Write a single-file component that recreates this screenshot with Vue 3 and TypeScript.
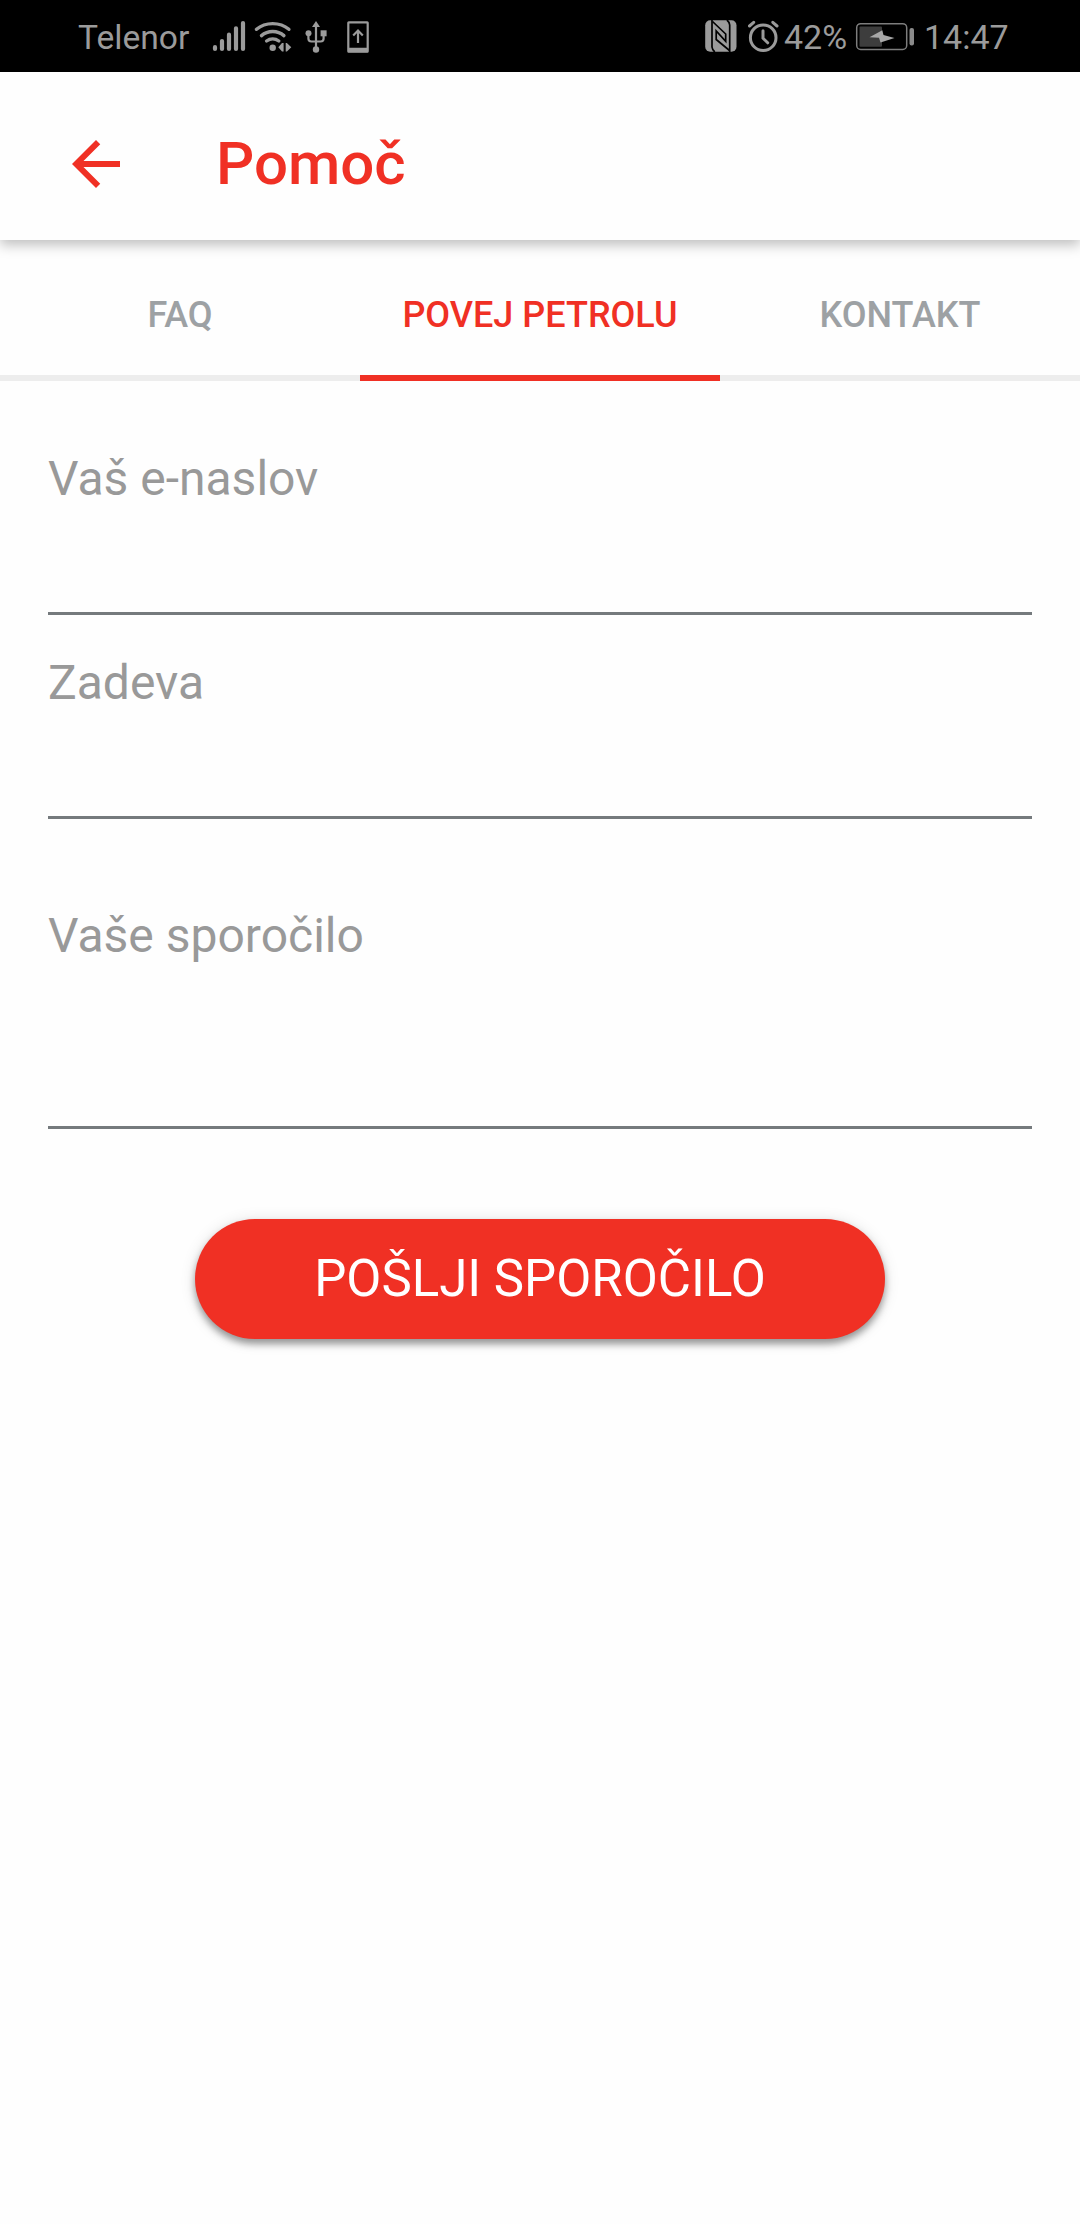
<script setup lang="ts">
import { ref } from 'vue'

interface Tab {
  id: string
  label: string
}

interface Field {
  id: string
  label: string
  tall: boolean
}

const tabs: Tab[] = [
  { id: 'faq', label: 'FAQ' },
  { id: 'tell', label: 'POVEJ PETROLU' },
  { id: 'contact', label: 'KONTAKT' },
]

const fields: Field[] = [
  { id: 'email', label: 'Vaš e-naslov', tall: false },
  { id: 'subject', label: 'Zadeva', tall: false },
  { id: 'message', label: 'Vaše sporočilo', tall: true },
]

const activeTab = ref('tell')
const values = ref<Record<string, string>>({ email: '', subject: '', message: '' })
</script>

<template>
  <div class="screen">
    <div class="status">
      <div class="status-side">
        <span class="carrier">Telenor</span>
        <!-- signal -->
        <svg class="signal" width="34" height="40" viewBox="212 17 34 40" fill="none" stroke="#9b9b9b" stroke-width="4.2" stroke-linecap="round">
          <path d="M215 47.2v1.8M222 41v8M229 34.7V49M236 28.3V49M243 23v26" />
        </svg>
        <!-- wifi -->
        <svg class="wifi" width="38" height="40" viewBox="254 17 38 40" fill="none" stroke="#9b9b9b" stroke-width="3.4" stroke-linecap="round">
          <path d="M256.5 29.3c9-7.6 23.400-7.600 32.400 0M261.500 35.600c6.300-5.500 16.100-5.500 22.400 0M266.600 41c3.600-2.700 8.600-2.700 12.200 0" />
          <circle cx="272.700" cy="47.700" r="3.200" fill="#9b9b9b" stroke="none" />
          <path d="M278.300 47.200l3.700-4.200h1.600v8.400H282zM285.700 43h1.200l4.400 4.200-4.400 4.200h-1.200z" fill="#9b9b9b" stroke="none" />
        </svg>
        <!-- usb -->
        <svg class="usb" width="22" height="40" viewBox="305 17 22 40" fill="none" stroke="#9b9b9b" stroke-width="2.200">
          <path d="M316 27v20M308.400 34v4.500q0 3 3 3h9.200q3 0 3-3V34" />
          <path d="M316 21l4 6h-8z" fill="#9b9b9b" stroke="none" />
          <circle cx="308.500" cy="33.300" r="3" fill="#9b9b9b" stroke="none" />
          <rect x="320.600" y="30.300" width="6" height="6" fill="#9b9b9b" stroke="none" />
          <circle cx="316" cy="49.500" r="3.200" fill="#9b9b9b" stroke="none" />
        </svg>
        <!-- phone with arrow -->
        <svg class="phone" width="22" height="40" viewBox="347 17 22 40" fill="none" stroke="#9b9b9b" stroke-width="2.200">
          <rect x="348.300" y="22.300" width="19.400" height="29.400" rx="0.500" />
          <path d="M348 50h20" stroke-width="4.500" />
          <path d="M358 43V30.500M353.200 35.500l4.800-5 4.800 5" />
        </svg>
      </div>
      <div class="status-side">
        <!-- nfc -->
        <svg class="nfc" width="32" height="40" viewBox="705 17 32 40">
          <rect x="705.200" y="20.300" width="31.300" height="31.400" rx="5" fill="#9b9b9b" />
          <g fill="none" stroke="#000" stroke-width="1.700">
            <path d="M712 20v27q.3 3 2.800 5M729.700 52V25q-.3-3-2.800-5" />
            <path d="M712.500 21.500L725.700 34v7.300L716.200 31v8.500L729.500 50.500" />
          </g>
        </svg>
        <!-- alarm -->
        <svg class="alarm" width="32" height="40" viewBox="747 17 32 40" fill="none" stroke="#9b9b9b" stroke-linecap="round">
          <circle cx="763.200" cy="37.700" r="12.800" stroke-width="3" />
          <path d="M763 30.800v7.400l4.700 4.600" stroke-width="3" />
          <path d="M749.500 26l4.200-3.700M772.800 22.300L777 26" stroke-width="3" />
        </svg>
        <span class="percent">42%</span>
        <!-- battery -->
        <svg class="battery" width="60" height="40" viewBox="855 17 60 40" fill="none">
          <rect x="856.700" y="23.700" width="50" height="25.800" rx="4" stroke="#7d7d7d" stroke-width="1.500" />
          <rect x="859.500" y="26.500" width="22.500" height="20.200" rx="1" fill="#3d3d3d" />
          <path d="M869.500 37.200l12.800-7 1.200 4.800 11 3-14 4.500-1.500-4.800z" fill="#a8a8a8" />
          <rect x="909.500" y="28" width="4.500" height="17.500" rx="2" fill="#8a8a8a" />
        </svg>
        <span class="clock">14:47</span>
      </div>
    </div>

    <header class="bar">
      <svg class="back" width="72" height="72" viewBox="0 0 24 24" fill="#f03024">
        <path d="M20 11H7.830l5.590-5.590L12 4l-8 8 8 8 1.410-1.410L7.830 13H20v-2z" />
      </svg>
      <h1 class="title">Pomoč</h1>
    </header>

    <nav class="tabs">
      <div
        v-for="tab in tabs"
        :key="tab.id"
        class="tab"
        :class="{ active: tab.id === activeTab }"
        @click="activeTab = tab.id"
      >
        {{ tab.label }}
      </div>
    </nav>

    <form class="form" @submit.prevent>
      <div v-for="field in fields" :key="field.id" class="field" :class="{ tall: field.tall }">
        <label class="label" :for="field.id">{{ field.label }}</label>
        <input :id="field.id" v-model="values[field.id]" class="input" />
      </div>
      <button class="send" type="submit">POŠLJI SPOROČILO</button>
    </form>
  </div>
</template>

<style>
body {
  margin: 0;
  background: #fefefe;
}
</style>

<style scoped>
.screen {
  width: 1080px;
  height: 2224px;
  overflow: hidden;
  display: flex;
  flex-direction: column;
  background: #fefefe;
  font-family: Roboto, sans-serif;
}

.status {
  height: 72px;
  box-sizing: border-box;
  padding: 2px 71px 0 78px;
  display: flex;
  justify-content: space-between;
  background: #000;
  color: #9b9b9b;
  font-size: 34px;
}

.status-side {
  display: flex;
  align-items: center;
  white-space: nowrap;
}

.carrier {
  width: 134px;
  font-size: 33.6px;
}

.percent {
  width: 66px;
  margin-left: 5px;
}

.clock {
  width: 85px;
  margin-left: 9px;
}

.battery {
  margin-left: 5px;
}

.wifi {
  margin-left: 8px;
}

.usb {
  margin-left: 13px;
}

.phone {
  margin-left: 20px;
}

.alarm {
  margin-left: 10px;
}

.bar {
  position: relative;
  z-index: 1;
  height: 168px;
  box-sizing: border-box;
  padding: 16px 60px 0;
  display: flex;
  align-items: center;
  background: #fefefe;
  box-shadow: 0 5px 12px rgba(0, 0, 0, 0.25);
  clip-path: inset(0 0 -30px 0);
}

.title {
  margin: 0 0 0 84px;
  color: #f03024;
  font-size: 60px;
  line-height: 70px;
  font-weight: 500;
}

.tabs {
  display: flex;
  height: 141px;
}

.tab {
  flex: 1;
  box-sizing: border-box;
  padding-top: 14px;
  border-bottom: 6px solid #ededed;
  display: flex;
  align-items: center;
  justify-content: center;
  color: #9da1a4;
  font-size: 36px;
  font-weight: 500;
}

.tab.active {
  color: #f03024;
  border-color: #f03024;
}

.form {
  padding: 30px 48px 0;
  display: flex;
  flex-direction: column;
}

.field {
  height: 204px;
  box-sizing: border-box;
  padding-top: 40px;
  border-bottom: 3px solid #757a7d;
  display: flex;
  flex-direction: column;
}

.field.tall {
  height: 310px;
  padding-top: 89px;
}

.label {
  color: #999;
  font-size: 48px;
  line-height: 56px;
}

.input {
  flex: 1;
  min-height: 0;
  padding: 0;
  border: 0;
  outline: 0;
  background: transparent;
  font: inherit;
  font-size: 48px;
}

.send {
  align-self: center;
  width: 690px;
  height: 120px;
  margin-top: 90px;
  padding: 0 0 2px;
  border: 0;
  border-radius: 60px;
  background: #f03024;
  color: #fff;
  font-family: inherit;
  font-size: 51px;
  box-shadow: 0 5px 7px rgba(0, 0, 0, 0.36), 0 2px 16px rgba(0, 0, 0, 0.12);
}
</style>
